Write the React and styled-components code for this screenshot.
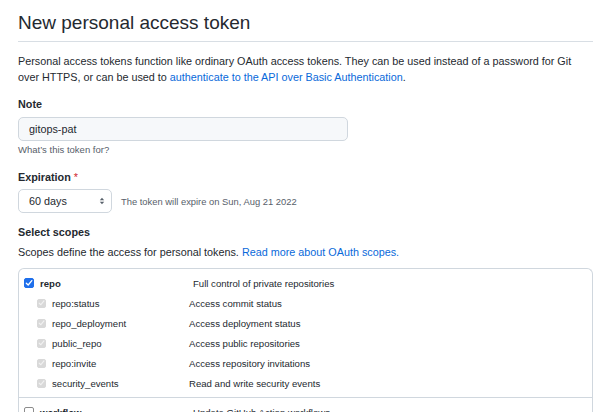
import React from "react";
import styled, { createGlobalStyle } from "styled-components";

const GlobalStyle = createGlobalStyle`
  html, body { margin: 0; padding: 0; background: #ffffff; }
  body {
    font-family: "Liberation Sans", Helvetica, Arial, sans-serif;
    color: #24292f;
    -webkit-font-smoothing: antialiased;
  }
  * { box-sizing: border-box; }
`;

const Page = styled.div`
  padding: 0 7px 0 18px;
  width: 600px;
  height: 412px;
  overflow: hidden;
`;

const Title = styled.h1`
  margin: 0;
  padding-top: 9px;
  padding-bottom: 4px;
  font-size: 19px;
  line-height: 28px;
  font-weight: 400;
  border-bottom: 1px solid #d8dee4;
`;

const Intro = styled.p`
  margin: 11px 0 0;
  font-size: 10.8px;
  line-height: 16px;
`;

const Link = styled.a`
  color: #0969da;
  text-decoration: none;
`;

const Label = styled.div`
  margin-top: ${(p) => p.$mt}px;
  font-size: 10.8px;
  line-height: 16px;
  font-weight: 700;
`;

const Required = styled.span`
  color: #cf222e;
  font-weight: 400;
  margin-left: 3px;
`;

const TextInput = styled.div`
  margin-top: 5px;
  width: 330px;
  height: 24px;
  padding: 0 10px;
  display: flex;
  align-items: center;
  font-size: 10.8px;
  background: #f6f8fa;
  border: 1px solid #d0d7de;
  border-radius: 5px;
`;

const Hint = styled.div`
  margin-top: ${(p) => p.$mt}px;
  font-size: 9.5px;
  line-height: 14px;
  color: #57606a;
`;

const ExpiryRow = styled.div`
  margin-top: 4px;
  display: flex;
  align-items: center;
  gap: 9px;
`;

const Select = styled.div`
  width: 94px;
  height: 24px;
  padding: 0 6px 0 10px;
  display: flex;
  align-items: center;
  justify-content: space-between;
  font-size: 10.8px;
  background: #ffffff;
  border: 1px solid #d0d7de;
  border-radius: 5px;
`;

const ExpiryNote = styled.span`
  font-size: 9.4px;
  color: #57606a;
`;

const Paragraph = styled.p`
  margin: 4px 0 0;
  font-size: 10.8px;
  line-height: 16px;
`;

const ScopeBox = styled.div`
  margin-top: 8px;
  border: 1px solid #d0d7de;
  border-bottom: none;
  border-radius: 6px 6px 0 0;
`;

const ScopeGroup = styled.div`
  padding: 4px 0 4px;
  border-bottom: 1px solid #d0d7de;
  ${(p) => p.$last && "padding-bottom: 0; border-bottom: none;"}
`;

const ScopeRow = styled.div`
  display: grid;
  grid-template-columns: ${(p) => (p.$sub ? "152px" : "169px")} 1fr;
  align-items: center;
  height: 20px;
  padding-left: ${(p) => (p.$sub ? "18px" : "5px")};
  font-size: 9.6px;
`;

const ScopeName = styled.label`
  display: flex;
  align-items: center;
  gap: ${(p) => (p.$sub ? "6px" : "6px")};
  font-weight: ${(p) => (p.$sub ? 400 : 700)};
  color: #24292f;
`;

const ScopeDesc = styled.span`
  color: #24292f;
`;

const Box = styled.span`
  width: ${(p) => (p.$sub ? 9 : 10)}px;
  height: ${(p) => (p.$sub ? 9 : 10)}px;
  border-radius: 2px;
  display: inline-flex;
  align-items: center;
  justify-content: center;
  flex: none;
  background: ${(p) =>
    p.$state === "on" ? "#1f6feb" : p.$state === "disabled" ? "#d9d9d9" : "#ffffff"};
  border: 1px solid
    ${(p) =>
      p.$state === "on" ? "#1f6feb" : p.$state === "disabled" ? "#d9d9d9" : "#8c8c8c"};
`;

function Check({ state, sub }) {
  return (
    <Box $state={state} $sub={sub}>
      {state !== "off" && (
        <svg width="8" height="8" viewBox="0 0 8 8">
          <path
            d="M1.3 4.2 L3.2 6 L6.8 1.6"
            fill="none"
            stroke={state === "on" ? "#ffffff" : "#f2f2f2"}
            strokeWidth="1.3"
            strokeLinecap="round"
            strokeLinejoin="round"
          />
        </svg>
      )}
    </Box>
  );
}

function UpDown() {
  return (
    <svg width="6" height="8" viewBox="0 0 6 8">
      <path d="M0.8 3.2 L3 0.8 L5.2 3.2 Z" fill="#57606a" />
      <path d="M0.8 4.8 L3 7.2 L5.2 4.8 Z" fill="#57606a" />
    </svg>
  );
}

const subScopes = [
  ["repo:status", "Access commit status"],
  ["repo_deployment", "Access deployment status"],
  ["public_repo", "Access public repositories"],
  ["repo:invite", "Access repository invitations"],
  ["security_events", "Read and write security events"],
];

export default function App() {
  return (
    <>
      <GlobalStyle />
      <Page>
        <Title>New personal access token</Title>
        <Intro>
          Personal access tokens function like ordinary OAuth access tokens. They can be used
          instead of a password for Git over HTTPS, or can be used to{" "}
          <Link href="#">authenticate to the API over Basic Authentication</Link>.
        </Intro>

        <Label $mt={11}>Note</Label>
        <TextInput>gitops-pat</TextInput>
        <Hint $mt={2}>What’s this token for?</Hint>

        <Label $mt={12}>
          Expiration<Required>*</Required>
        </Label>
        <ExpiryRow>
          <Select>
            <span>60 days</span>
            <UpDown />
          </Select>
          <ExpiryNote>The token will expire on Sun, Aug 21 2022</ExpiryNote>
        </ExpiryRow>

        <Label $mt={11}>Select scopes</Label>
        <Paragraph>
          Scopes define the access for personal tokens.{" "}
          <Link href="#">Read more about OAuth scopes.</Link>
        </Paragraph>

        <ScopeBox>
          <ScopeGroup>
            <ScopeRow>
              <ScopeName>
                <Check state="on" />
                repo
              </ScopeName>
              <ScopeDesc>Full control of private repositories</ScopeDesc>
            </ScopeRow>
            {subScopes.map(([name, desc]) => (
              <ScopeRow $sub key={name}>
                <ScopeName $sub>
                  <Check state="disabled" sub />
                  {name}
                </ScopeName>
                <ScopeDesc>{desc}</ScopeDesc>
              </ScopeRow>
            ))}
          </ScopeGroup>
          <ScopeGroup $last>
            <ScopeRow>
              <ScopeName>
                <Check state="off" />
                workflow
              </ScopeName>
              <ScopeDesc>Update GitHub Action workflows</ScopeDesc>
            </ScopeRow>
          </ScopeGroup>
        </ScopeBox>
      </Page>
    </>
  );
}
